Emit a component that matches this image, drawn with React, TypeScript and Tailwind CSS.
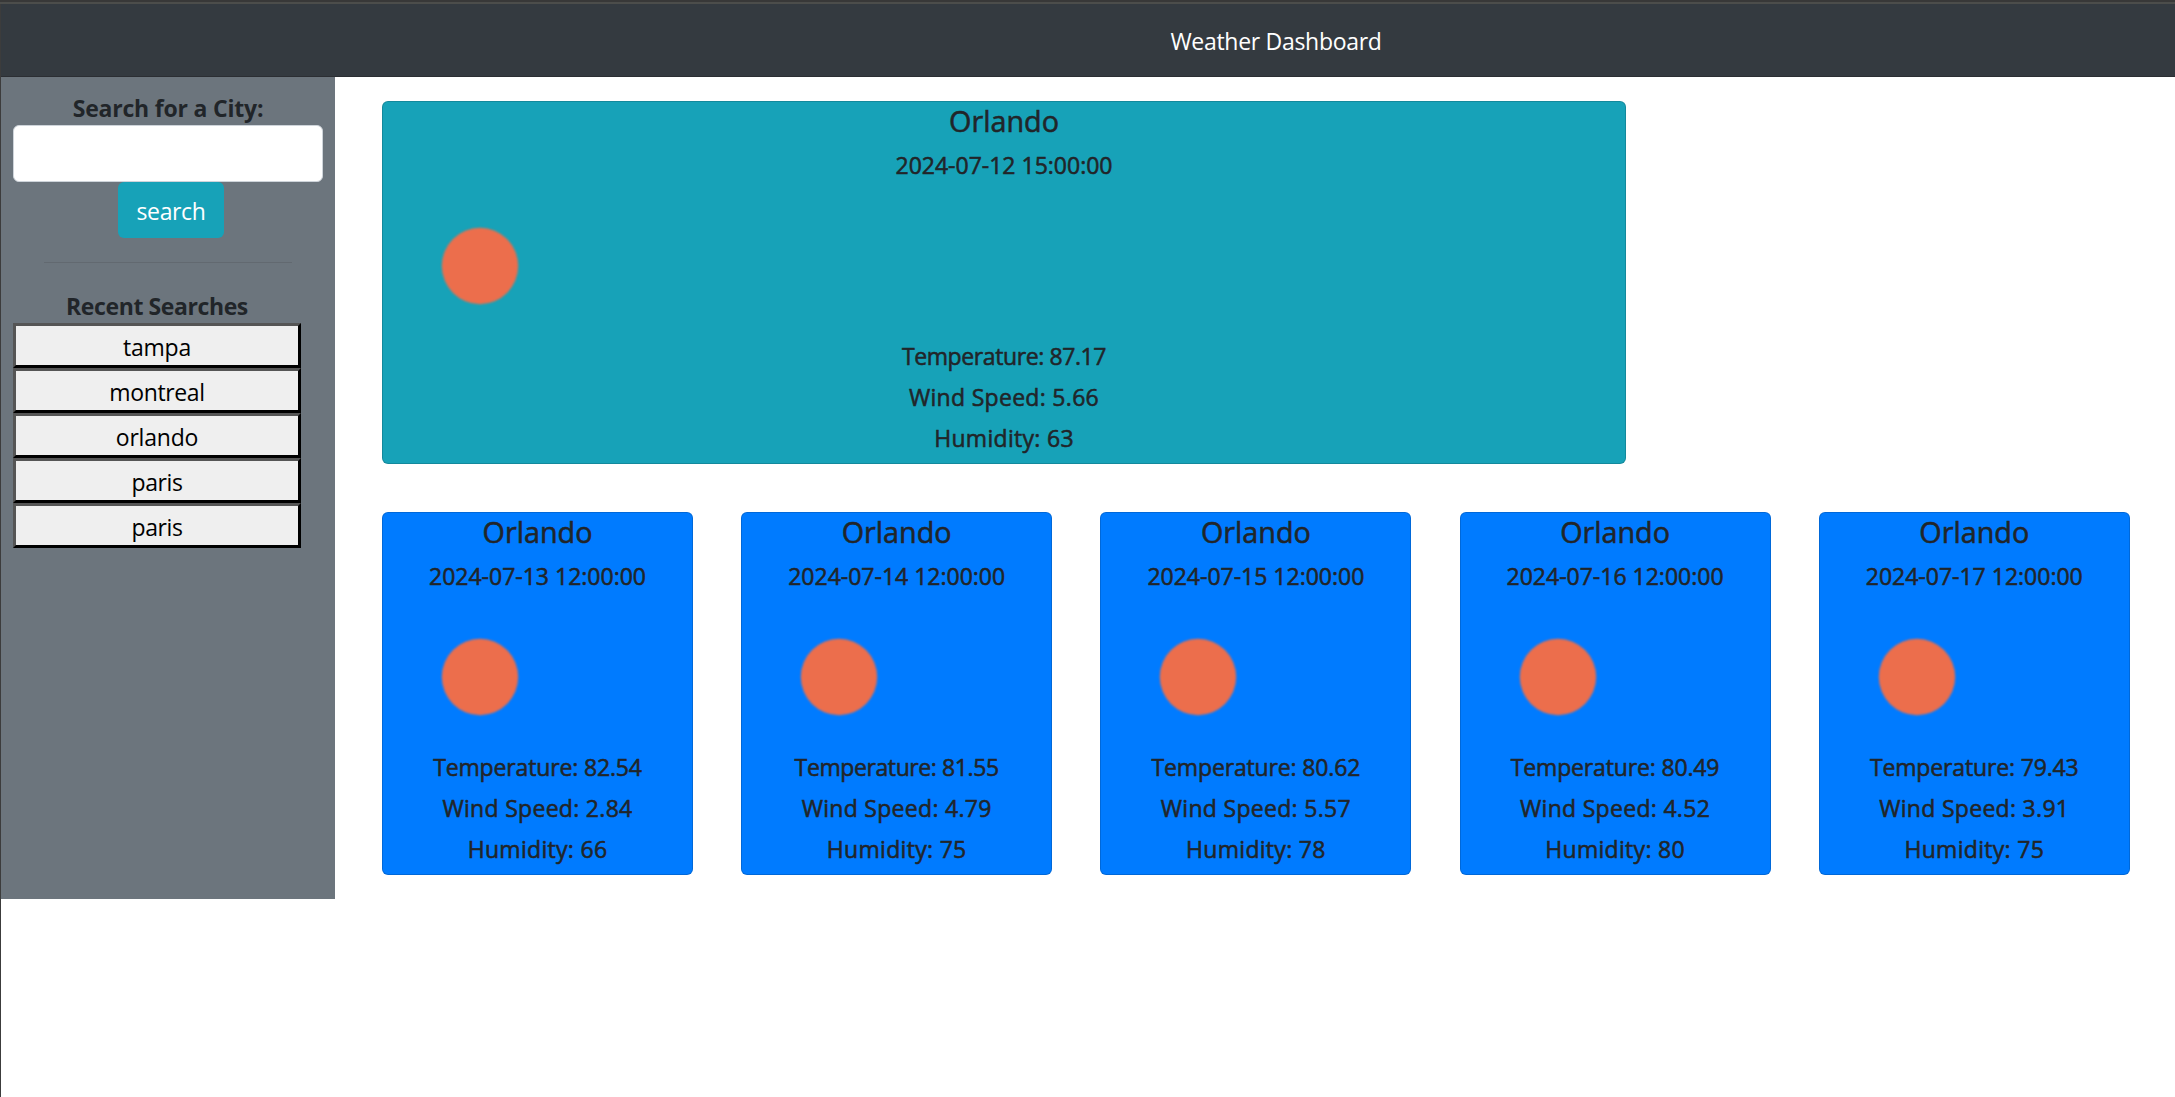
type Forecast = {
  date: string;
  temperature: string;
  wind: string;
  humidity: string;
  temperatureSpacing: string;
};

const today: Forecast = {
  date: '2024-07-12 15:00:00',
  temperature: '87.17',
  wind: '5.66',
  humidity: '63',
  temperatureSpacing: 'tracking-[-0.4px]',
};

const upcoming: Forecast[] = [
  { date: '2024-07-13 12:00:00', temperature: '82.54', wind: '2.84', humidity: '66', temperatureSpacing: 'tracking-[-0.15px]' },
  { date: '2024-07-14 12:00:00', temperature: '81.55', wind: '4.79', humidity: '75', temperatureSpacing: 'tracking-[-0.4px]' },
  { date: '2024-07-15 12:00:00', temperature: '80.62', wind: '5.57', humidity: '78', temperatureSpacing: 'tracking-[-0.15px]' },
  { date: '2024-07-16 12:00:00', temperature: '80.49', wind: '4.52', humidity: '80', temperatureSpacing: 'tracking-[-0.15px]' },
  { date: '2024-07-17 12:00:00', temperature: '79.43', wind: '3.91', humidity: '75', temperatureSpacing: 'tracking-[-0.15px]' },
];

const recent = [
  { name: 'tampa', spacing: 'tracking-[-0.2px]' },
  { name: 'montreal', spacing: 'tracking-[-0.35px]' },
  { name: 'orlando', spacing: 'tracking-[-0.2px]' },
  { name: 'paris', spacing: 'tracking-[-0.4px]' },
  { name: 'paris', spacing: 'tracking-[-0.4px]' },
];

function SunIcon() {
  return (
    <svg viewBox="0 0 150 150" className="-mt-[0.5px] mb-[1.5px] ml-[22px] block size-[150px]" aria-label="clear sky">
      <circle cx="75" cy="75" r="38.2" fill="#ec6e4c" className="blur-[1px]" />
    </svg>
  );
}

function WeatherCard({ forecast, className }: { forecast: Forecast; className: string }) {
  return (
    <article
      className={`flex h-[363px] flex-col rounded-[6px] border border-black/15 pt-[0.5px] text-center text-[23px] leading-[28.8px] text-[#212529] [-webkit-text-stroke:0.55px_#212529] ${className}`}
    >
      <h4 className="mb-3 text-[28.75px] leading-9">Orlando</h4>
      <h5 className="mb-3">{forecast.date}</h5>
      <SunIcon />
      <h5 className={`mb-3 ${forecast.temperatureSpacing}`}>Temperature: {forecast.temperature}</h5>
      <h5 className="mb-3 tracking-[0.3px]">Wind Speed: {forecast.wind}</h5>
      <h5 className="tracking-[0.3px]">Humidity: {forecast.humidity}</h5>
    </article>
  );
}

export default function App() {
  return (
    <div className="flex h-[1097px] w-[2175px] flex-col overflow-hidden bg-white font-['Open_Sans','Noto_Sans',sans-serif] text-[23px] leading-9 text-[#212529]">
      <div className="h-1 shrink-0 border-b-2 border-[#4c4d4b] bg-[#383838]" />
      <div className="flex min-h-0 flex-1 flex-col border-l border-[#3c3c3c]">
        <header className="flex h-[73px] shrink-0 items-center justify-center border-b border-[#2b2e33] bg-[#343a40] pt-0.5 pl-[376px] text-white">
          <h1 className="tracking-[-0.3px]">Weather Dashboard</h1>
        </header>

        <div className="flex items-start">
          <aside className="flex h-[822px] w-[334px] shrink-0 flex-col bg-[#6c757d] px-3 pt-[13px]">
            <label htmlFor="city" className="-mb-px text-center font-bold tracking-[-0.2px]">
              Search for a City:
            </label>
            <input
              id="city"
              className="h-[57px] w-[310px] shrink-0 rounded-[6px] border border-[#ced4da] bg-white px-4 outline-none"
            />
            <button className="ml-[105px] h-14 w-[106px] shrink-0 rounded-[6px] bg-[#17a2b8] pt-0.5 tracking-[-0.35px] text-white">
              search
            </button>
            <hr className="mx-auto mt-6 w-[248px] border-t border-[#626970]" />
            <section className="mt-[25px] w-72">
              <h2 className="-mb-px text-center font-bold tracking-[-0.4px]">Recent Searches</h2>
              {recent.map((city, i) => (
                <button
                  key={i}
                  className={`block h-[45px] w-72 border-3 border-t-[#555] border-r-black border-b-black border-l-[#555] bg-[#efefef] pt-[3px] text-black ${city.spacing}`}
                >
                  {city.name}
                </button>
              ))}
            </section>
          </aside>

          <main className="flex flex-col gap-12 pt-6 pl-[47px]">
            <WeatherCard forecast={today} className="w-[1244px] bg-[#17a2b8]" />
            <section className="flex gap-[48.2px]">
              {upcoming.map((forecast) => (
                <WeatherCard key={forecast.date} forecast={forecast} className="w-[311px] bg-[#007bff]" />
              ))}
            </section>
          </main>
        </div>
      </div>
    </div>
  );
}
